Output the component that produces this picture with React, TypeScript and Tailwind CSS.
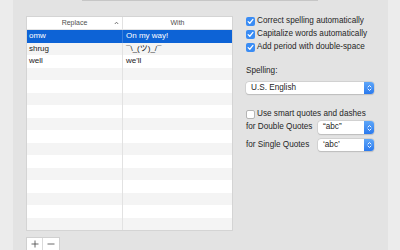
import React from 'react'

const font = { fontFamily: '"Liberation Sans", "Noto Sans CJK JP", Arial, sans-serif' }

const rows: [string, string][] = [
  ['omw', 'On my way!'],
  ['shrug', '¯\\_(ツ)_/¯'],
  ['well', "we'll"],
]

function Check({ on }: { on: boolean }) {
  if (!on) {
    return <span className="w-[9px] h-[9px] rounded-[2px] bg-white border border-[#b5b5b5] shrink-0" />
  }
  return (
    <span className="w-[9px] h-[9px] rounded-[2px] bg-[#3a8cf4] shrink-0 flex items-center justify-center">
      <svg width="7" height="7" viewBox="0 0 8 8" fill="none">
        <path d="M1.3 4.2 L3.2 6 L6.8 1.6" stroke="white" strokeWidth="1.4" strokeLinecap="round" strokeLinejoin="round" />
      </svg>
    </span>
  )
}

function Stepper() {
  return (
    <span className="w-[10px] h-full rounded-r-[3px] bg-gradient-to-b from-[#5ea6f8] to-[#2a79ee] flex items-center justify-center shrink-0">
      <svg width="5" height="8" viewBox="0 0 5 8" fill="none">
        <path d="M1 3 L2.5 1.5 L4 3 M1 5 L2.5 6.5 L4 5" stroke="white" strokeWidth="0.9" strokeLinecap="round" strokeLinejoin="round" />
      </svg>
    </span>
  )
}

function Select({ label, className }: { label: string; className: string }) {
  return (
    <div className={`flex items-stretch bg-white rounded-[3px] shadow-[0_0_0_0.5px_#c4c4c4,0_0.5px_1px_#b8b8b8] ${className}`}>
      <span className="flex-1 flex items-center pl-[5px] text-[8.2px] text-[#262626]">{label}</span>
      <Stepper />
    </div>
  )
}

export default function App() {
  return (
    <div className="w-[400px] h-[250px] flex overflow-hidden" style={font}>
      <div className="w-[13px] bg-[#ececec] shrink-0" />
      <div className="flex-1 bg-[#e3e3e3] flex flex-col">
        {/* segmented control, cut off at the top */}
        <div className="ml-[69px] w-[236px] h-[2px] bg-white border-b border-[#c6c6c6] flex">
          <div className="w-[48px]" />
          <div className="w-[29px] bg-[#3d8af7]" />
        </div>

        <div className="flex pl-[13px] pt-[15px] gap-[13px]">
          {/* replacement table */}
          <div className="flex flex-col">
            <div className="w-[207px] bg-white border border-[#d4d4d4] flex flex-col">
              <div className="h-[13px] flex text-[7px] text-[#4f4f4f] border-b border-[#e4e4e4]">
                <div className="w-[96px] flex items-center justify-center relative border-r border-[#e2e2e2]">
                  Replace
                  <svg className="absolute right-[3px] top-[4px]" width="5" height="4" viewBox="0 0 5 4" fill="none">
                    <path d="M0.8 3 L2.5 1.2 L4.2 3" stroke="#555" strokeWidth="0.8" />
                  </svg>
                </div>
                <div className="flex-1 flex items-center justify-center">With</div>
              </div>
              {Array.from({ length: 16 }).map((_, i) => {
                const r = rows[i]
                const sel = i === 0
                const bg = sel ? 'bg-[#0d63d6] text-white' : i % 2 === 1 ? 'bg-[#f4f4f4] text-[#222]' : 'bg-white text-[#222]'
                return (
                  <div key={i} className={`h-[12.5px] flex text-[8px] ${bg}`}>
                    <div className={`w-[96px] flex items-center pl-[2px] border-r ${sel ? 'border-[#3a7fdc]' : 'border-[#e2e2e2]'}`}>
                      {r ? r[0] : ''}
                    </div>
                    <div className="flex-1 flex items-center pl-[3px]">{r ? r[1] : ''}</div>
                  </div>
                )
              })}
            </div>
            <div className="mt-[6px] flex w-[34px] h-[14px] bg-white border border-[#d0d0d0] text-[#3c3c3c]">
              <div className="w-[17px] flex items-center justify-center border-r border-[#dadada]">
                <svg width="8" height="8" viewBox="0 0 8 8">
                  <path d="M4 0.5 V7.5 M0.5 4 H7.5" stroke="#444" strokeWidth="0.8" />
                </svg>
              </div>
              <div className="w-[17px] flex items-center justify-center">
                <svg width="8" height="8" viewBox="0 0 8 8">
                  <path d="M0.5 4 H7.5" stroke="#444" strokeWidth="0.8" />
                </svg>
              </div>
            </div>
          </div>

          {/* options */}
          <div className="w-[128px] flex flex-col text-[8.2px] text-[#262626]">
            <div className="h-[13px] -mt-[1px] flex items-center gap-[2px]">
              <Check on />
              <span>Correct spelling automatically</span>
            </div>
            <div className="h-[13px] flex items-center gap-[2px]">
              <Check on />
              <span>Capitalize words automatically</span>
            </div>
            <div className="h-[13px] flex items-center gap-[2px]">
              <Check on />
              <span>Add period with double-space</span>
            </div>
            <div className="h-[11px] mt-[12px] flex items-center">Spelling:</div>
            <Select label="U.S. English" className="mt-[5px] h-[12px] w-[128px]" />
            <div className="h-[12px] mt-[14px] flex items-center gap-[2px]">
              <Check on={false} />
              <span>Use smart quotes and dashes</span>
            </div>
            <div className="h-[13px] mt-[1px] flex items-center justify-between">
              <span>for Double Quotes</span>
              <Select label="“abc”" className="h-[13px] w-[56px]" />
            </div>
            <div className="h-[12px] mt-[5px] flex items-center justify-between">
              <span>for Single Quotes</span>
              <Select label="‘abc’" className="h-[12px] w-[56px]" />
            </div>
          </div>
        </div>
      </div>
      <div className="w-[12px] bg-[#ececec] shrink-0" />
    </div>
  )
}
